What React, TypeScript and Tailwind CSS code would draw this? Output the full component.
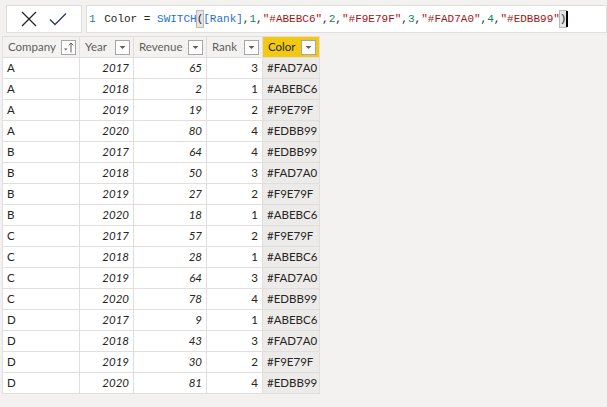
const rows: [string, number, number, number, string][] = [
  ["A", 2017, 65, 3, "#FAD7A0"],
  ["A", 2018, 2, 1, "#ABEBC6"],
  ["A", 2019, 19, 2, "#F9E79F"],
  ["A", 2020, 80, 4, "#EDBB99"],
  ["B", 2017, 64, 4, "#EDBB99"],
  ["B", 2018, 50, 3, "#FAD7A0"],
  ["B", 2019, 27, 2, "#F9E79F"],
  ["B", 2020, 18, 1, "#ABEBC6"],
  ["C", 2017, 57, 2, "#F9E79F"],
  ["C", 2018, 28, 1, "#ABEBC6"],
  ["C", 2019, 64, 3, "#FAD7A0"],
  ["C", 2020, 78, 4, "#EDBB99"],
  ["D", 2017, 9, 1, "#ABEBC6"],
  ["D", 2018, 43, 3, "#FAD7A0"],
  ["D", 2019, 30, 2, "#F9E79F"],
  ["D", 2020, 81, 4, "#EDBB99"],
];

function FilterButton({ sorted }: { sorted?: boolean }) {
  return (
    <div className="w-[15px] h-[15px] bg-white border border-[#a6a6a6] flex items-center justify-center">
      {sorted ? (
        <svg width="13" height="13" viewBox="0 0 13 13">
          <path d="M2 7.5h3.5l-1.75 2z" fill="#605e5c" />
          <path d="M9 11.5V2M6.8 4.3L9 2l2.2 2.3" stroke="#605e5c" strokeWidth="1" fill="none" />
        </svg>
      ) : (
        <svg width="9" height="9" viewBox="0 0 9 9">
          <path d="M1.5 3h6L4.5 6z" fill="#605e5c" />
        </svg>
      )}
    </div>
  );
}

function Header({ label, w, active, sorted }: { label: string; w: string; active?: boolean; sorted?: boolean }) {
  return (
    <div
      className={`${w} h-[21px] flex items-center justify-between pl-[5px] pr-[3px] border-r border-b border-[#e1dfdd] ${
        active ? "bg-[#f2c811] text-[#252423]" : "bg-[#f3f2f1] text-[#605e5c]"
      }`}
    >
      <span>{label}</span>
      <FilterButton sorted={sorted} />
    </div>
  );
}

export default function App() {
  const cell = "h-[21px] flex items-center border-r border-b border-[#e1dfdd] px-[4px]";
  return (
    <div className="w-[607px] h-[407px] bg-[#f3f2f1] overflow-hidden" style={{ fontFamily: '"Segoe UI", Lato, sans-serif' }}>
      {/* formula bar */}
      <div className="flex gap-[4px] pt-[5px] pl-[6px] h-[36px]">
        <div className="w-[76px] h-[28px] bg-white border border-[#e1dfdd] flex items-center justify-around px-[8px]">
          <svg width="18" height="18" viewBox="0 0 18 18">
            <path d="M2 2L16 16M16 2L2 16" stroke="#252423" strokeWidth="1.3" fill="none" />
          </svg>
          <svg width="20" height="16" viewBox="0 0 20 16">
            <path d="M2 8.5L7 13.5L18 2.5" stroke="#2b3b68" strokeWidth="1.3" fill="none" />
          </svg>
        </div>
        <div
          className="flex-1 h-[28px] bg-white border border-[#e1dfdd] flex items-center pl-[2px] text-[11px] whitespace-pre"
          style={{ fontFamily: '"Liberation Mono", monospace' }}
        >
          <span className="text-[#237893] mr-[2px]">1</span>
          <span className="text-[#252423]"> Color = </span>
          <span className="text-[#1f6fd6]">SWITCH</span>
          <span className="bg-[#e4e4e4] outline outline-1 outline-[#b9b9b9] text-[#252423]">(</span>
          <span className="text-[#1f6fd6]">[Rank]</span>
          <span className="text-[#252423]">,</span>
          <span className="text-[#098658]">1</span>
          <span className="text-[#252423]">,</span>
          <span className="text-[#a31515]">"#ABEBC6"</span>
          <span className="text-[#252423]">,</span>
          <span className="text-[#098658]">2</span>
          <span className="text-[#252423]">,</span>
          <span className="text-[#a31515]">"#F9E79F"</span>
          <span className="text-[#252423]">,</span>
          <span className="text-[#098658]">3</span>
          <span className="text-[#252423]">,</span>
          <span className="text-[#a31515]">"#FAD7A0"</span>
          <span className="text-[#252423]">,</span>
          <span className="text-[#098658]">4</span>
          <span className="text-[#252423]">,</span>
          <span className="text-[#a31515]">"#EDBB99"</span>
          <span className="bg-[#e4e4e4] outline outline-1 outline-[#b9b9b9] text-[#252423]">)</span>
          <span className="inline-block w-[2px] h-[16px] bg-black" />
        </div>
      </div>

      {/* table */}
      <div className="ml-[2px] w-fit flex flex-col border-l border-t border-[#e1dfdd] text-[11.5px] bg-white">
        <div className="flex">
          <Header label="Company" w="w-[77px]" sorted />
          <Header label="Year" w="w-[54px]" />
          <Header label="Revenue" w="w-[73px]" />
          <Header label="Rank" w="w-[56px]" />
          <Header label="Color" w="w-[57px]" active />
        </div>
        {rows.map(([c, y, r, k, col], i) => (
          <div key={i} className="flex text-[#252423]">
            <div className={`${cell} w-[77px]`}>{c}</div>
            <div className={`${cell} w-[54px] justify-end italic`}>{y}</div>
            <div className={`${cell} w-[73px] justify-end italic`}>{r}</div>
            <div className={`${cell} w-[56px] justify-end`}>{k}</div>
            <div className={`${cell} w-[57px] bg-[#edebe9]`}>{col}</div>
          </div>
        ))}
      </div>
    </div>
  );
}
